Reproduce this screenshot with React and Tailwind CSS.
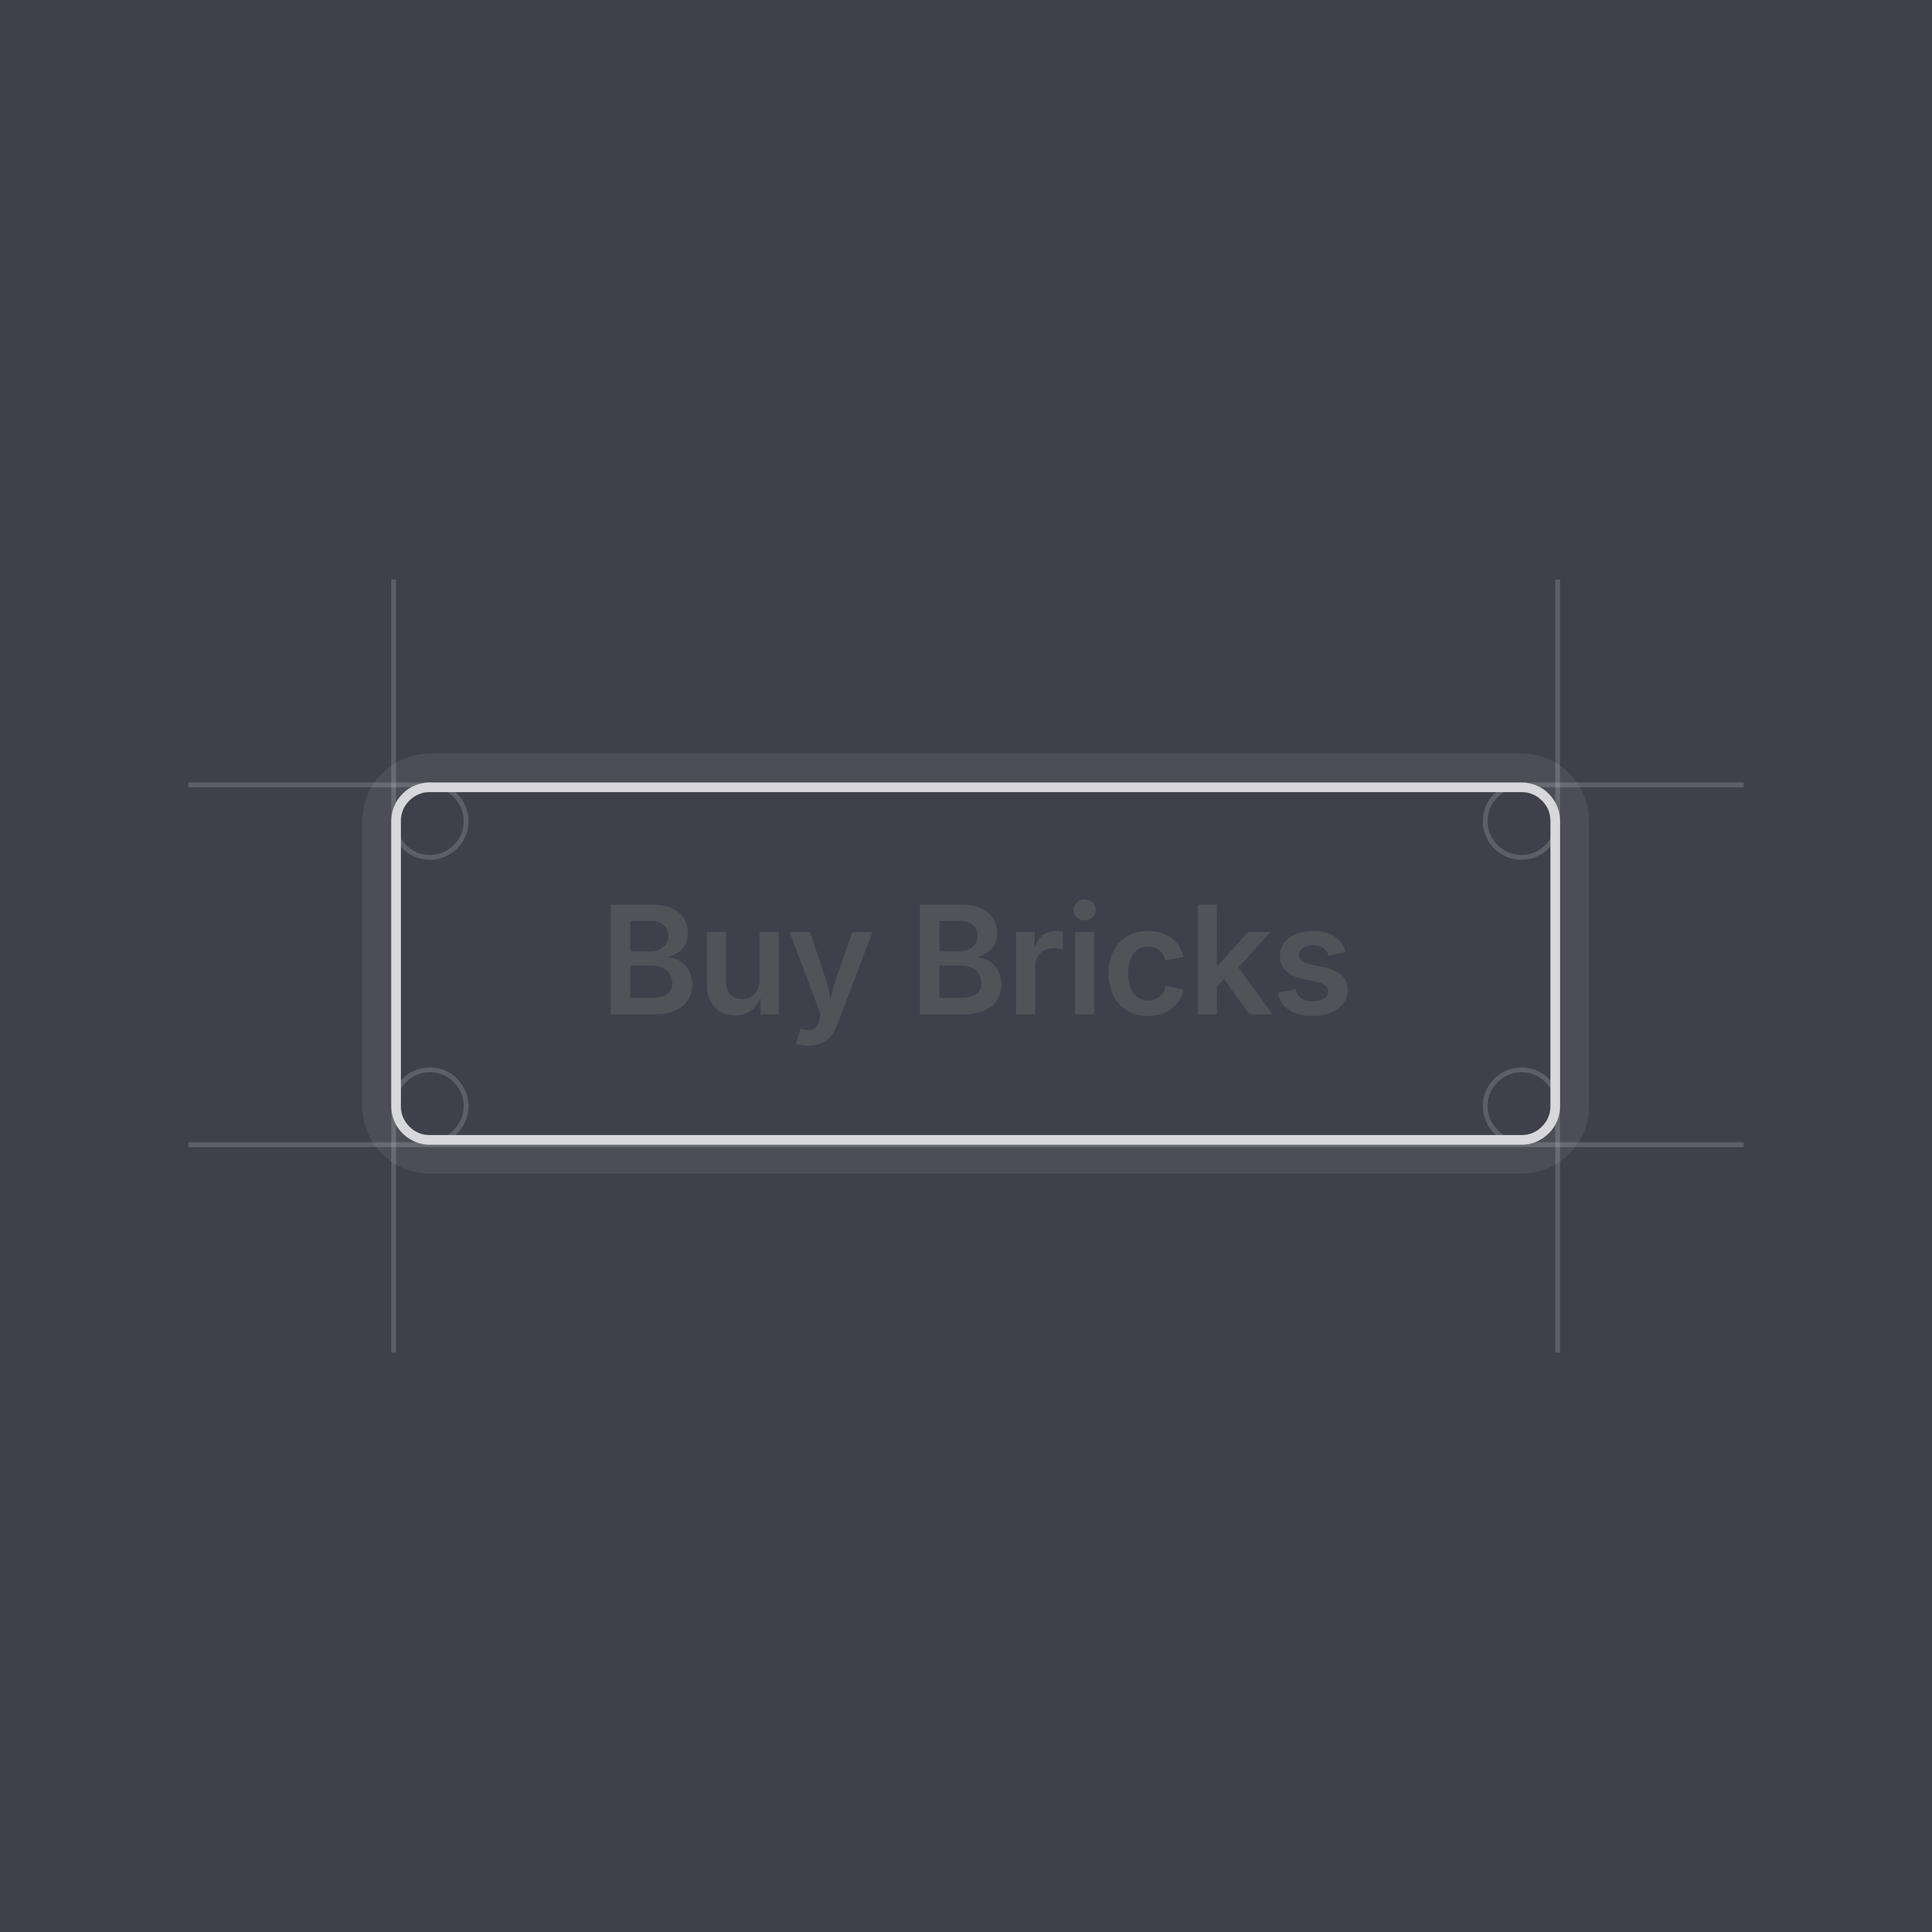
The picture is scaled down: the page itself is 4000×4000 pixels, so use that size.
export default function App() {
  return (
    <div className="w-[4000px] h-[4000px] bg-[#40404a] pt-[1620px] pl-[810px] font-['Inter',sans-serif]">
      <div className="relative w-[2420px] h-[750px]">
        {/* guide lines */}
        <div className="absolute top-0 left-[-420px] w-[3220px] h-[10px] bg-white/[0.16]" />
        <div className="absolute top-[745px] left-[-420px] w-[3220px] h-[10px] bg-white/[0.16]" />
        <div className="absolute left-0 top-[-420px] w-[10px] h-[1600px] bg-white/[0.16]" />
        <div className="absolute left-[2410px] top-[-420px] w-[10px] h-[1600px] bg-white/[0.16]" />
        {/* button */}
        <div className="relative w-full h-full rounded-[80px] border-[20px] border-[#d8d8dc] overflow-hidden shadow-[0_0_0_60px_rgba(255,255,255,0.07)] flex items-center justify-center pb-[16px]">
          <div className="absolute -left-[20px] -top-[20px] size-[160px] rounded-full border-[10px] border-white/[0.16]" />
          <div className="absolute -right-[20px] -top-[20px] size-[160px] rounded-full border-[10px] border-white/[0.16]" />
          <div className="absolute -left-[20px] -bottom-[20px] size-[160px] rounded-full border-[10px] border-white/[0.16]" />
          <div className="absolute -right-[20px] -bottom-[20px] size-[160px] rounded-full border-[10px] border-white/[0.16]" />
          <span className="text-[312px] leading-none font-semibold tracking-[-0.015em] text-[#525259] whitespace-nowrap">Buy Bricks</span>
        </div>
      </div>
    </div>
  );
}
